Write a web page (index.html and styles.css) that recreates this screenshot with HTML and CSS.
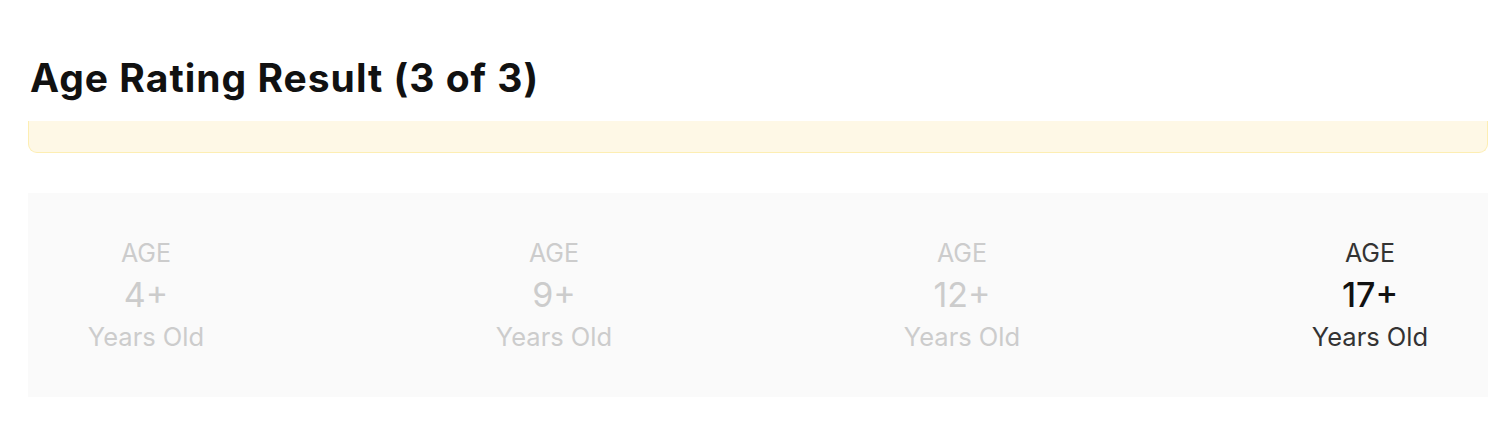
FILE: index.html
```html
<!DOCTYPE html>
<html>
<head>
<meta charset="utf-8">
<link rel="stylesheet" href="styles.css">
</head>
<body>
<div class="page">
  <h1 class="title">Age Rating Result (3 of 3)</h1>
  <div class="notice"></div>
  <div class="ratings">
    <div class="rating">
      <div class="age-label">AGE</div>
      <div class="age-value">4+</div>
      <div class="age-unit">Years Old</div>
    </div>
    <div class="rating">
      <div class="age-label">AGE</div>
      <div class="age-value">9+</div>
      <div class="age-unit">Years Old</div>
    </div>
    <div class="rating">
      <div class="age-label">AGE</div>
      <div class="age-value">12+</div>
      <div class="age-unit">Years Old</div>
    </div>
    <div class="rating active">
      <div class="age-label">AGE</div>
      <div class="age-value">17+</div>
      <div class="age-unit">Years Old</div>
    </div>
  </div>
</div>
</body>
</html>
```

FILE: styles.css
```css
html, body {
  margin: 0;
  padding: 0;
  background: #ffffff;
}
.page {
  padding: 0 12px 0 28px;
  font-family: Inter, "Liberation Sans", Arial, sans-serif;
}
.title {
  margin: 0;
  padding: 55px 0 0 2px;
  font-family: Inter, Roboto, "Liberation Sans", sans-serif;
  font-weight: 700;
  font-size: 39px;
  line-height: 46px;
  letter-spacing: 1px;
  height: 66px;
  color: #111111;
}
.notice {
  height: 31px;
  background: #fef8e6;
  border: 1px solid #fdeeb3;
  border-top: 0;
  border-radius: 0 0 9px 9px;
}
.ratings {
  box-sizing: border-box;
  margin-top: 40px;
  height: 204px;
  background: #fafafa;
  display: flex;
  justify-content: space-between;
  align-items: flex-start;
  padding: 46px 60px 0;
}
.rating {
  display: flex;
  flex-direction: column;
  align-items: center;
  color: #cccccc;
  width: 116px;
}
.age-label {
  font-size: 25px;
  line-height: 28px;
}
.age-value {
  font-size: 34px;
  line-height: 40px;
  margin-top: 8px;
}
.age-unit {
  font-size: 25.5px;
  line-height: 32px;
  margin-top: 6px;
  white-space: nowrap;
}
.rating.active {
  color: #333333;
}
.rating.active .age-value {
  color: #111111;
  font-weight: 500;
}
```
